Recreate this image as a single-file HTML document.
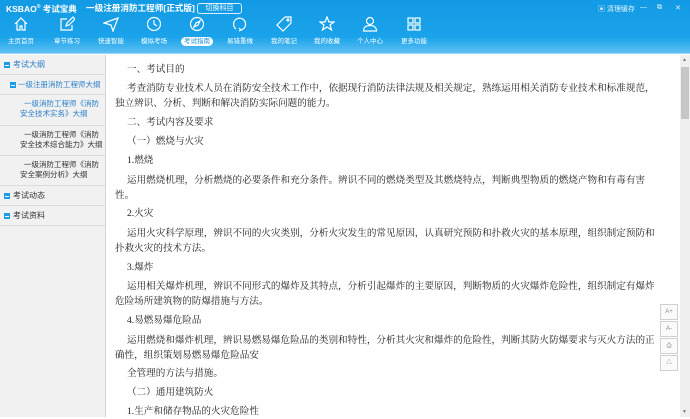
<!DOCTYPE html>
<html><head><meta charset="utf-8">
<style>
*{margin:0;padding:0;box-sizing:border-box}
body{width:690px;height:417px;overflow:hidden;font-family:"Liberation Sans","Noto Sans CJK SC",sans-serif;background:#fff;position:relative}
#hd{position:absolute;left:0;top:0;width:690px;height:54px;background:linear-gradient(#129ae4,#1aa3ea 70%,#5cc0f2);border-bottom:1px solid #9fd6f4}
.logo{position:absolute;left:6px;top:3px;color:#fff;font-weight:bold;font-size:8.5px;white-space:nowrap}
.ttl{position:absolute;left:86px;top:2px;color:#fff;font-weight:bold;font-size:8.6px;white-space:nowrap}
.sw{position:absolute;left:197px;top:3px;width:45px;height:11px;border:1px solid #d8efff;border-radius:3px;color:#fff;font-size:7px;text-align:center;line-height:9px}
.tr{position:absolute;top:4px;color:#e4f4ff;font-size:7px}
.nav{position:absolute;top:16px;width:44px;text-align:center;color:#fff;font-size:6.5px}
.nav svg{display:block;margin:0 auto 5px}
.nav span{display:inline-block;padding:0 3px;border-radius:5px;line-height:9px}
.nav.on span{background:#fff;color:#1a8fd8}
#sb{position:absolute;left:0;top:55px;width:106px;height:362px;background:#f1f1f1;border-right:1px solid #d6d6d6}
.it{border-bottom:1px solid #dcdcdc;font-size:8px;color:#333;position:relative}
.bx{position:absolute;width:6px;height:6px;background:#1a9de6}
.bx:after{content:"";position:absolute;left:1px;top:2.5px;width:4px;height:1px;background:#fff}
#ct{position:absolute;left:107px;top:55px;width:573px;height:362px;font-family:"Liberation Serif","Noto Serif CJK SC","Noto Sans CJK SC",serif;font-size:9.6px;color:#222}
#ct p{position:absolute;left:8px;width:548px;line-height:15px;text-indent:12px;white-space:normal}
#scr{position:absolute;left:680px;top:55px;width:10px;height:362px;background:#f0f0f0}
.tool{position:absolute;left:660px;width:18px;height:16px;border:1px solid #d0d0d0;background:#fafafa;color:#888;font-size:6px;text-align:center;line-height:14px}
</style></head><body>
<div id="hd">
<div class="logo">KSBAO<sup style="font-size:5px">®</sup> 考试宝典</div>
<div class="ttl">一级注册消防工程师[正式版]</div>
<div class="sw">切换科目</div>
<div class="tr" style="left:598px">▣ 清理缓存</div>
<div class="tr" style="left:640px">—</div>
<div class="tr" style="left:657px">⧉</div>
<div class="tr" style="left:675px">✕</div>
<div class="nav" style="left:-1px"><svg width="16" height="16" viewBox="0 0 16 16" fill="none" stroke="#fff" stroke-width="1.2"><path d="M2 8L8 2l6 6M4 6.5V14h3v-4h2v4h3V6.5"/></svg><span>主页首页</span></div>
<div class="nav" style="left:45px"><svg width="16" height="16" viewBox="0 0 16 16" fill="none" stroke="#fff" stroke-width="1.2"><path d="M13 9v5H2V3h6M7 10l1-3 6-6 2 2-6 6z"/></svg><span>章节练习</span></div>
<div class="nav" style="left:89px"><svg width="16" height="16" viewBox="0 0 16 16" fill="none" stroke="#fff" stroke-width="1.2"><path d="M1 7l14-5-5 13-2-6z"/></svg><span>快速智能</span></div>
<div class="nav" style="left:132px"><svg width="16" height="16" viewBox="0 0 16 16" fill="none" stroke="#fff" stroke-width="1.2"><circle cx="8" cy="8" r="6.5"/><path d="M8 4v4l3 2"/></svg><span>模拟考场</span></div>
<div class="nav on" style="left:175px"><svg width="16" height="16" viewBox="0 0 16 16" fill="none" stroke="#fff" stroke-width="1.2"><circle cx="8" cy="8" r="6.5"/><path d="M11 5L9 9 5 11 7 7z"/></svg><span>考试指南</span></div>
<div class="nav" style="left:218px"><svg width="16" height="16" viewBox="0 0 16 16" fill="none" stroke="#fff" stroke-width="1.2"><path d="M4 13A6 6 0 1 1 9 14M9 14l-2-2M9 14l-2 1"/></svg><span>易错重做</span></div>
<div class="nav" style="left:262px"><svg width="16" height="16" viewBox="0 0 16 16" fill="none" stroke="#fff" stroke-width="1.2"><path d="M9 1h6v6l-8 8-6-6z"/><circle cx="12" cy="4" r="1"/></svg><span>我的笔记</span></div>
<div class="nav" style="left:305px"><svg width="16" height="16" viewBox="0 0 16 16" fill="none" stroke="#fff" stroke-width="1.2"><path d="M8 1l2 5h5l-4 3 1.5 5L8 11l-4.5 3L5 9 1 6h5z"/></svg><span>我的收藏</span></div>
<div class="nav" style="left:348px"><svg width="16" height="16" viewBox="0 0 16 16" fill="none" stroke="#fff" stroke-width="1.2"><circle cx="8" cy="5" r="3.5"/><path d="M1.5 15c0-4 3-5.5 6.5-5.5s6.5 1.5 6.5 5.5z"/></svg><span>个人中心</span></div>
<div class="nav" style="left:392px"><svg width="16" height="16" viewBox="0 0 16 16" fill="none" stroke="#fff" stroke-width="1.2"><rect x="2" y="2" width="5" height="5"/><rect x="9" y="2" width="5" height="5"/><rect x="2" y="9" width="5" height="5"/><rect x="9" y="9" width="5" height="5"/></svg><span>更多功能</span></div>
</div>
<div id="sb">
<div class="it" style="height:20px;color:#2b7fc8"><i class="bx" style="left:4px;top:7px"></i><span style="position:absolute;left:13px;top:4px">考试大纲</span></div>
<div class="it" style="height:20px;color:#2b7fc8"><i class="bx" style="left:10px;top:7px"></i><span style="position:absolute;left:18px;top:4px;font-size:7.5px">一级注册消防工程师大纲</span></div>
<div class="it" style="height:31px;color:#2b7fc8;font-size:7.5px;line-height:10px;padding:4px 0 0 20px;text-indent:4px">一级消防工程师《消防安全技术实务》大纲</div>
<div class="it" style="height:30px;font-size:7.5px;line-height:10px;padding:4px 0 0 20px;text-indent:4px">一级消防工程师《消防安全技术综合能力》大纲</div>
<div class="it" style="height:30px;font-size:7.5px;line-height:10px;padding:4px 0 0 20px;text-indent:4px">一级消防工程师《消防安全案例分析》大纲</div>
<div class="it" style="height:20px"><i class="bx" style="left:4px;top:7px"></i><span style="position:absolute;left:13px;top:4px">考试动态</span></div>
<div class="it" style="height:20px"><i class="bx" style="left:4px;top:7px"></i><span style="position:absolute;left:13px;top:4px">考试资料</span></div>
</div>
<div id="ct">
<p style="top:7px">一、考试目的</p>
<p style="top:26px">考查消防专业技术人员在消防安全技术工作中，依据现行消防法律法规及相关规定，熟练运用相关消防专业技术和标准规范，独立辨识、分析、判断和解决消防实际问题的能力。</p>
<p style="top:60px">二、考试内容及要求</p>
<p style="top:79px">（一）燃烧与火灾</p>
<p style="top:98px">1.燃烧</p>
<p style="top:118px">运用燃烧机理，分析燃烧的必要条件和充分条件。辨识不同的燃烧类型及其燃烧特点，判断典型物质的燃烧产物和有毒有害性。</p>
<p style="top:151px">2.火灾</p>
<p style="top:171px">运用火灾科学原理，辨识不同的火灾类别，分析火灾发生的常见原因，认真研究预防和扑救火灾的基本原理，组织制定预防和扑救火灾的技术方法。</p>
<p style="top:205px">3.爆炸</p>
<p style="top:224px">运用相关爆炸机理，辨识不同形式的爆炸及其特点，分析引起爆炸的主要原因，判断物质的火灾爆炸危险性，组织制定有爆炸危险场所建筑物的防爆措施与方法。</p>
<p style="top:258px">4.易燃易爆危险品</p>
<p style="top:278px">运用燃烧和爆炸机理，辨识易燃易爆危险品的类别和特性，分析其火灾和爆炸的危险性，判断其防火防爆要求与灭火方法的正确性，组织策划易燃易爆危险品安</p>
<p style="top:311px">全管理的方法与措施。</p>
<p style="top:330px">（二）通用建筑防火</p>
<p style="top:349px">1.生产和储存物品的火灾危险性</p>
</div>
<div class="tool" style="top:304px">A+</div>
<div class="tool" style="top:321px">A-</div>
<div class="tool" style="top:338px">⎙</div>
<div class="tool" style="top:355px">△</div>
<div id="scr"><div style="position:absolute;left:1px;top:12px;width:8px;height:52px;background:#c6c6c6"></div><div style="position:absolute;left:2px;top:2px;font-size:5px;color:#777">▲</div><div style="position:absolute;left:2px;top:354px;font-size:5px;color:#777">▼</div></div>
</body></html>
